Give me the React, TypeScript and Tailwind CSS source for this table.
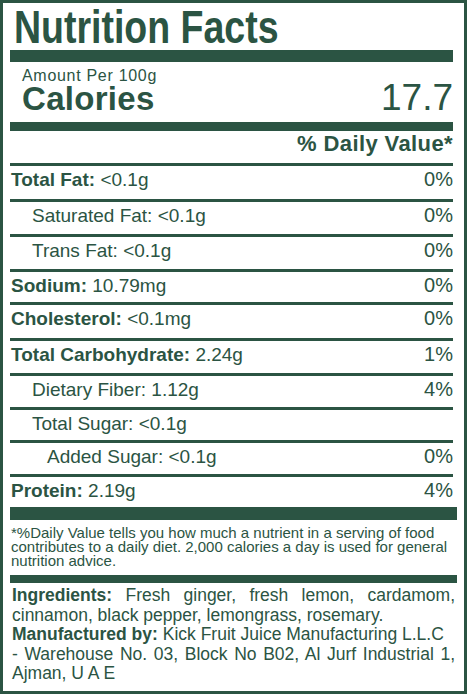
const green = 'text-[#2b5443]';

const rows = [
  { label: 'Total Fat:', value: '<0.1g', dv: '0%', bold: true, indent: 'pl-[1px]', h: 'h-[36px]' },
  { label: 'Saturated Fat:', value: '<0.1g', dv: '0%', bold: false, indent: 'pl-[22px]', h: 'h-[35px]' },
  { label: 'Trans Fat:', value: '<0.1g', dv: '0%', bold: false, indent: 'pl-[22px]', h: 'h-[35px]' },
  { label: 'Sodium:', value: '10.79mg', dv: '0%', bold: true, indent: 'pl-[1px]', h: 'h-[33px]' },
  { label: 'Cholesterol:', value: '<0.1mg', dv: '0%', bold: true, indent: 'pl-[1px]', h: 'h-[36px]' },
  { label: 'Total Carbohydrate:', value: '2.24g', dv: '1%', bold: true, indent: 'pl-[1px]', h: 'h-[35px]' },
  { label: 'Dietary Fiber:', value: '1.12g', dv: '4%', bold: false, indent: 'pl-[22px]', h: 'h-[34px]' },
  { label: 'Total Sugar:', value: '<0.1g', dv: '', bold: false, indent: 'pl-[22px]', h: 'h-[33px]' },
  { label: 'Added Sugar:', value: '<0.1g', dv: '0%', bold: false, indent: 'pl-[37px]', h: 'h-[34px]' },
  { label: 'Protein:', value: '2.19g', dv: '4%', bold: true, indent: 'pl-[1px]', h: 'h-[33.5px]' },
];

export default function App() {
  return (
    <div
      className={`w-[467px] h-[694px] bg-white border-[3px] border-[#2b5443] px-[7px] ${green}`}
      style={{ fontFamily: '"Liberation Sans", Arial, sans-serif' }}
    >
      <div className="mr-[4px]">
        <div className="mt-[1px] pl-[4px] h-[46px]">
          {/* condensed headline: no narrow face installed, so squeeze the bold one */}
          <h1 className="inline-block origin-left scale-x-[0.815] text-[46px] leading-[46px] font-bold whitespace-nowrap">
            Nutrition Facts
          </h1>
        </div>
        <div className="h-[12px] bg-[#2b5443]" />

        <div className="h-[60px] pt-[5.5px] pl-[12px]">
          <div className="text-[16px] leading-[16px] tracking-[0.7px]">Amount Per 100g</div>
          <div className="flex items-baseline justify-between">
            <span className="text-[33px] leading-[28px] font-bold tracking-[0.3px]">Calories</span>
            <span className="text-[37px] leading-[28px]">17.7</span>
          </div>
        </div>
        <div className="h-[9px] bg-[#2b5443]" />

        <div className="h-[31.5px] text-right text-[22px] leading-[25px] font-bold tracking-[0.4px]">
          % Daily Value*
        </div>

        {rows.map((row) => (
          <div
            key={row.label}
            className={`border-t-[3px] border-[#2b5443] flex justify-between text-[19px] leading-[27px] ${row.h} ${row.indent}`}
          >
            <span>
              <span className={row.bold ? 'font-bold' : ''}>{row.label}</span> {row.value}
            </span>
            <span className="text-[20px]">{row.dv}</span>
          </div>
        ))}
      </div>

      <div className="h-[13px] bg-[#2b5443]" />
      <div className="h-[55px] pt-[5.8px] pl-[1px] text-[15px] leading-[14px]">
        *%Daily Value tells you how much a nutrient in a serving of food contributes to a daily diet. 2,000
        calories a day is used for general nutrition advice.
      </div>
      <div className="h-[8px] bg-[#2b5443]" />
      <p className="pt-[3px] px-[2px] text-[17.5px] leading-[19.5px] text-justify">
        <span className="font-bold">Ingredients:</span> Fresh ginger, fresh lemon, cardamom, cinnamon, black
        pepper, lemongrass, rosemary.
        <br />
        <span className="font-bold">Manufactured by:</span> Kick Fruit Juice Manufacturing L.L.C
        <br />- Warehouse No. 03, Block No B02, Al Jurf Industrial 1, Ajman, U A E
      </p>
    </div>
  );
}
